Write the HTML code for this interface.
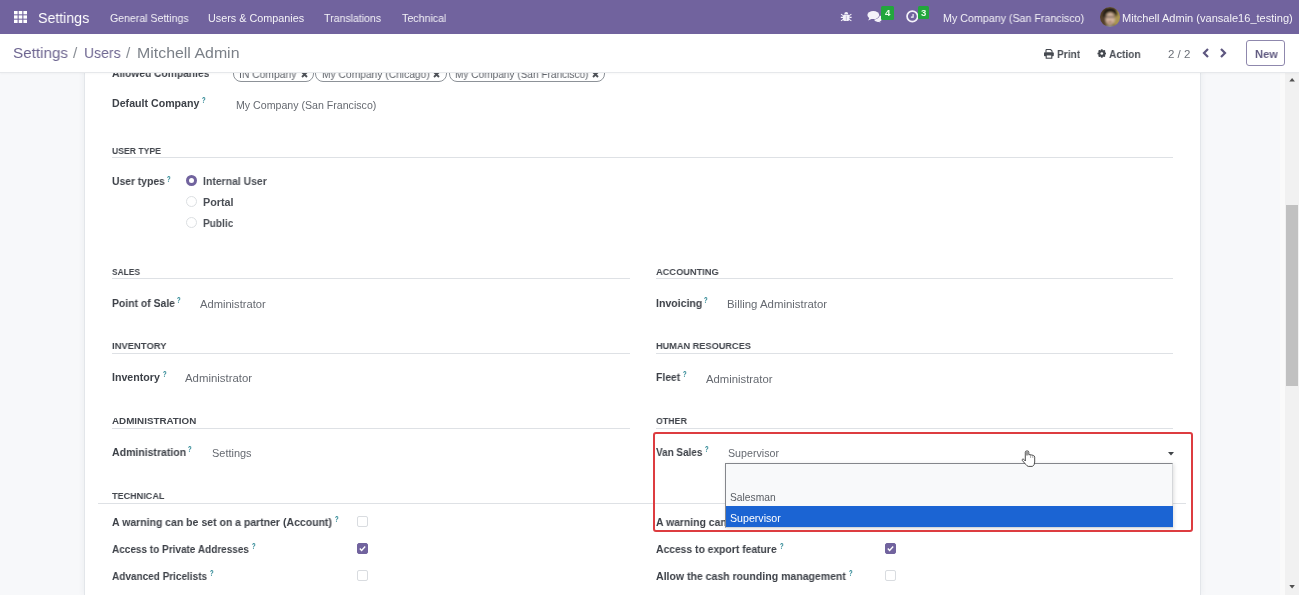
<!DOCTYPE html>
<html><head><meta charset="utf-8">
<style>
html,body{margin:0;padding:0;}
body{width:1299px;height:595px;overflow:hidden;position:relative;background:#f7f8fa;font-family:"Liberation Sans",sans-serif;}
.a{position:absolute;}
.tx{position:absolute;white-space:pre;line-height:1;transform-origin:0 0;will-change:transform;font-family:"Liberation Sans",sans-serif;}
.hp{position:absolute;will-change:transform;font-size:8.4px;line-height:1;font-weight:700;color:#2a8592;transform:scaleX(0.68);transform-origin:0 0;font-family:"Liberation Sans",sans-serif;}
.nav{left:0;top:0;width:1299px;height:34px;background:#71639e;}
.cp{left:0;top:34px;width:1299px;height:38px;background:#fff;border-bottom:1px solid #e6e8eb;box-shadow:0 1px 2px rgba(0,0,0,0.03);}
.sheet{left:84px;top:0;width:1117px;height:595px;background:#fff;border-left:1px solid #e3e6ea;border-right:1px solid #e3e6ea;box-sizing:border-box;box-shadow:0 0 7px rgba(40,50,70,0.06);}
.sep{position:absolute;height:1px;background:#dee1e5;}
.radio{position:absolute;width:11px;height:11px;border-radius:50%;box-sizing:border-box;border:1.3px solid #dcdfe2;background:#fff;}
.radio.on{border:3.5px solid #71639e;background:#fff;}
.cb{position:absolute;width:11px;height:11px;border-radius:2px;box-sizing:border-box;border:1px solid #d9dce0;background:#fff;}
.cb.on{background:#71639e;border-color:#71639e;}
.tag{position:absolute;height:17px;top:65px;border:1px solid #8d9298;border-radius:8px;box-sizing:border-box;background:#fff;}
.clip{left:0;top:72px;width:1299px;height:523px;overflow:hidden;}
.inner{left:0;top:-72px;width:1299px;height:595px;}
</style></head><body>
<div class="a clip"><div class="a inner">
<div class="a sheet"></div>
<!-- tags -->
<div class="tag" style="left:232.5px;width:81px;"></div>
<div class="tag" style="left:315px;width:131.6px;"></div>
<div class="tag" style="left:448.7px;width:156.2px;"></div>
<svg class="a" style="left:300.5px;top:71px" width="7" height="7" viewBox="0 0 7 7"><path d="M1 1 L6 6 M6 1 L1 6" stroke="#4e5258" stroke-width="1.9"/></svg>
<svg class="a" style="left:433px;top:71px" width="7" height="7" viewBox="0 0 7 7"><path d="M1 1 L6 6 M6 1 L1 6" stroke="#4e5258" stroke-width="1.9"/></svg>
<svg class="a" style="left:591.5px;top:71px" width="7" height="7" viewBox="0 0 7 7"><path d="M1 1 L6 6 M6 1 L1 6" stroke="#4e5258" stroke-width="1.9"/></svg>

<div class="sep" style="left:112px;top:157px;width:1061px;"></div>
<div class="sep" style="left:112px;top:278px;width:518px;"></div>
<div class="sep" style="left:656px;top:278px;width:517px;"></div>
<div class="sep" style="left:112px;top:353px;width:518px;"></div>
<div class="sep" style="left:656px;top:353px;width:517px;"></div>
<div class="sep" style="left:112px;top:428px;width:518px;"></div>
<div class="sep" style="left:656px;top:428px;width:517px;"></div>
<div class="sep" style="left:98px;top:503px;width:1088px;"></div>

<div class="radio on" style="left:186.2px;top:174.7px;"></div>
<div class="radio" style="left:186.2px;top:196px;"></div>
<div class="radio" style="left:186.2px;top:217px;"></div>

<div class="cb" style="left:357.2px;top:516px;"></div>
<div class="cb on" style="left:357.2px;top:543.2px;"><svg width="11" height="11" viewBox="0 0 11 11" style="position:absolute;left:-1px;top:-1px"><path d="M2.8 5.6 L4.6 7.4 L8.2 3.6" fill="none" stroke="#fff" stroke-width="1.4"/></svg></div>
<div class="cb" style="left:357.2px;top:570px;"></div>
<div class="cb on" style="left:884.5px;top:543.2px;"><svg width="11" height="11" viewBox="0 0 11 11" style="position:absolute;left:-1px;top:-1px"><path d="M2.8 5.6 L4.6 7.4 L8.2 3.6" fill="none" stroke="#fff" stroke-width="1.4"/></svg></div>
<div class="cb" style="left:884.5px;top:570px;"></div>

<span class="tx" style="left:112.40px;top:67.61px;font-size:10.61px;font-weight:700;color:#3d4148;transform:scaleX(0.9653);">Allowed Companies</span>
<span class="tx" style="left:239.43px;top:68.51px;font-size:10.61px;font-weight:400;color:#5f636a;transform:scaleX(0.9724);">IN Company</span>
<span class="tx" style="left:322.03px;top:68.51px;font-size:10.61px;font-weight:400;color:#5f636a;transform:scaleX(0.9664);">My Company (Chicago)</span>
<span class="tx" style="left:454.75px;top:68.51px;font-size:10.61px;font-weight:400;color:#5f636a;transform:scaleX(0.9511);">My Company (San Francisco)</span>
<span class="tx" style="left:112.40px;top:98.41px;font-size:10.61px;font-weight:700;color:#3d4148;transform:scaleX(1.0023);">Default Company</span>
<span class="tx" style="left:236.40px;top:100.01px;font-size:10.61px;font-weight:400;color:#666a71;transform:scaleX(1.0000);">My Company (San Francisco)</span>
<span class="tx" style="left:112.20px;top:146.12px;font-size:9.78px;font-weight:700;color:#42464d;transform:scaleX(0.8855);">USER TYPE</span>
<span class="tx" style="left:112.33px;top:175.51px;font-size:10.61px;font-weight:700;color:#3d4148;transform:scaleX(0.9736);">User types</span>
<span class="tx" style="left:203.42px;top:176.01px;font-size:10.61px;font-weight:700;color:#4a4e55;transform:scaleX(0.9844);">Internal User</span>
<span class="tx" style="left:203.38px;top:196.81px;font-size:10.61px;font-weight:700;color:#4a4e55;transform:scaleX(1.0179);">Portal</span>
<span class="tx" style="left:203.45px;top:217.51px;font-size:10.61px;font-weight:700;color:#4a4e55;transform:scaleX(0.9516);">Public</span>
<span class="tx" style="left:111.90px;top:267.02px;font-size:9.78px;font-weight:700;color:#42464d;transform:scaleX(0.8625);">SALES</span>
<span class="tx" style="left:112.22px;top:297.81px;font-size:10.61px;font-weight:700;color:#3d4148;transform:scaleX(0.9794);">Point of Sale</span>
<span class="tx" style="left:200.40px;top:298.81px;font-size:10.61px;font-weight:400;color:#666a71;transform:scaleX(1.0516);">Administrator</span>
<span class="tx" style="left:111.73px;top:341.42px;font-size:9.78px;font-weight:700;color:#42464d;transform:scaleX(0.9655);">INVENTORY</span>
<span class="tx" style="left:112.20px;top:372.31px;font-size:10.61px;font-weight:700;color:#3d4148;transform:scaleX(1.0021);">Inventory</span>
<span class="tx" style="left:185.20px;top:373.31px;font-size:10.61px;font-weight:400;color:#666a71;transform:scaleX(1.0726);">Administrator</span>
<span class="tx" style="left:111.90px;top:416.22px;font-size:9.78px;font-weight:700;color:#42464d;transform:scaleX(1.0048);">ADMINISTRATION</span>
<span class="tx" style="left:112.20px;top:446.81px;font-size:10.61px;font-weight:700;color:#3d4148;transform:scaleX(0.9892);">Administration</span>
<span class="tx" style="left:212.17px;top:447.81px;font-size:10.61px;font-weight:400;color:#666a71;transform:scaleX(1.0324);">Settings</span>
<span class="tx" style="left:656.00px;top:267.02px;font-size:9.78px;font-weight:700;color:#42464d;transform:scaleX(0.9485);">ACCOUNTING</span>
<span class="tx" style="left:656.11px;top:297.81px;font-size:10.61px;font-weight:700;color:#3d4148;transform:scaleX(0.9933);">Invoicing</span>
<span class="tx" style="left:727.12px;top:299.01px;font-size:10.61px;font-weight:400;color:#666a71;transform:scaleX(1.0750);">Billing Administrator</span>
<span class="tx" style="left:655.86px;top:341.42px;font-size:9.78px;font-weight:700;color:#42464d;transform:scaleX(0.9400);">HUMAN RESOURCES</span>
<span class="tx" style="left:656.12px;top:372.31px;font-size:10.61px;font-weight:700;color:#3d4148;transform:scaleX(0.9750);">Fleet</span>
<span class="tx" style="left:705.90px;top:373.51px;font-size:10.61px;font-weight:400;color:#666a71;transform:scaleX(1.0645);">Administrator</span>
<span class="tx" style="left:656.00px;top:416.22px;font-size:9.78px;font-weight:700;color:#42464d;transform:scaleX(0.9029);">OTHER</span>
<span class="tx" style="left:656.10px;top:446.81px;font-size:10.61px;font-weight:700;color:#3d4148;transform:scaleX(0.9347);">Van Sales</span>
<span class="tx" style="left:728.39px;top:448.01px;font-size:10.61px;font-weight:400;color:#666a71;transform:scaleX(1.0060);">Supervisor</span>
<span class="tx" style="left:112.00px;top:491.02px;font-size:9.78px;font-weight:700;color:#42464d;transform:scaleX(0.9286);">TECHNICAL</span>
<span class="tx" style="left:112.20px;top:516.91px;font-size:10.61px;font-weight:700;color:#3d4148;transform:scaleX(0.9883);">A warning can be set on a partner (Account)</span>
<span class="tx" style="left:112.20px;top:544.11px;font-size:10.61px;font-weight:700;color:#3d4148;transform:scaleX(0.9428);">Access to Private Addresses</span>
<span class="tx" style="left:112.20px;top:571.11px;font-size:10.61px;font-weight:700;color:#3d4148;transform:scaleX(0.9426);">Advanced Pricelists</span>
<span class="tx" style="left:656.10px;top:516.91px;font-size:10.61px;font-weight:700;color:#3d4148;transform:scaleX(0.9792);">A warning can</span>
<span class="tx" style="left:656.10px;top:544.11px;font-size:10.61px;font-weight:700;color:#3d4148;transform:scaleX(0.9742);">Access to export feature</span>
<span class="tx" style="left:656.10px;top:571.11px;font-size:10.61px;font-weight:700;color:#3d4148;transform:scaleX(0.9911);">Allow the cash rounding management</span>
<span class="hp" style="left:201.6px;top:96.0px">?</span>
<span class="hp" style="left:166.9px;top:174.8px">?</span>
<span class="hp" style="left:177.2px;top:295.5px">?</span>
<span class="hp" style="left:162.5px;top:370.2px">?</span>
<span class="hp" style="left:188.4px;top:445.0px">?</span>
<span class="hp" style="left:703.9px;top:295.7px">?</span>
<span class="hp" style="left:682.8px;top:370.1px">?</span>
<span class="hp" style="left:705.0px;top:445.0px">?</span>
<span class="hp" style="left:335.3px;top:515.0px">?</span>
<span class="hp" style="left:252.0px;top:542.0px">?</span>
<span class="hp" style="left:209.6px;top:569.0px">?</span>
<span class="hp" style="left:779.6px;top:542.1px">?</span>
<span class="hp" style="left:848.8px;top:569.0px">?</span>
<span class="hp" style="left:213.6px;top:65.0px">?</span>

<!-- select caret -->
<svg class="a" style="left:1167.5px;top:451.5px" width="6" height="4" viewBox="0 0 6 4"><path d="M0 0 H6 L3 3.5 Z" fill="#404448"/></svg>

<!-- dropdown -->
<div class="a" style="left:725px;top:463.3px;width:448px;height:64.7px;box-sizing:border-box;background:#f8f9fa;border-left:1px solid #85878c;border-top:1.7px solid #84868b;border-right:1px solid #d5d7da;border-bottom:1px solid #d5d7da;box-shadow:1px 1px 4px rgba(0,0,0,0.13);"></div>
<div class="a" style="left:725.8px;top:506.3px;width:447.2px;height:20.8px;background:#1b64d3;"></div>
<span class="tx" style="left:729.69px;top:492.67px;font-size:10.20px;font-weight:400;color:#595d63;transform:scaleX(1.0068);">Salesman</span>
<span class="tx" style="left:729.66px;top:513.67px;font-size:10.20px;font-weight:400;color:#ffffff;transform:scaleX(1.0426);">Supervisor</span>

<!-- red box -->
<div class="a" style="left:653px;top:431.8px;width:539.8px;height:100.7px;box-sizing:border-box;border:2.9px solid #dd3c40;border-radius:3px;"></div>

<!-- hand cursor -->
<svg class="a" style="left:1021px;top:450px" width="15" height="18" viewBox="0 0 15 18">
<path d="M4.3 11 V2.2 Q4.3 0.9 6.05 0.9 Q7.8 0.9 7.8 2.2 V4.6 L10.2 4.9 L12.3 5.4 Q13.7 5.9 13.7 7.2 V12 Q13.7 15 11.5 16.4 H7.3 Q6 16 4.8 14.5 L1.2 10.3 Q0.8 9.6 1.6 9.2 Q2.4 8.9 3 9.5 L4.3 11 Z" fill="#fff" stroke="#3a3a3a" stroke-width="0.9"/>
<rect x="4.8" y="1.5" width="2.5" height="4" fill="#9a9a9a"/>
<path d="M9.6 5 V8 M11.8 5.4 V8" stroke="#777" stroke-width="0.6"/>
</svg>
</div></div>

<!-- scrollbar -->
<div class="a" style="left:1280px;top:72px;width:5px;height:523px;background:#fafafa;"></div>
<div class="a" style="left:1285px;top:72px;width:14px;height:523px;background:#f1f1f1;"></div>
<div class="a" style="left:1286px;top:204.5px;width:11.5px;height:181.7px;background:#c1c1c1;"></div>
<svg class="a" style="left:1289px;top:78.4px" width="6.2" height="4" viewBox="0 0 7 5"><path d="M0 4.5 H7 L3.5 0 Z" fill="#505050"/></svg>
<svg class="a" style="left:1288.8px;top:585px" width="6.2" height="4" viewBox="0 0 7 5"><path d="M0 0 H7 L3.5 4.5 Z" fill="#505050"/></svg>

<!-- navbar -->
<div class="a nav"></div>
<svg class="a" style="left:14px;top:11px" width="13" height="12" viewBox="0 0 13 12">
<g fill="#fff"><rect x="0" y="0" width="3.6" height="3.3"/><rect x="4.7" y="0" width="3.6" height="3.3"/><rect x="9.4" y="0" width="3.6" height="3.3"/>
<rect x="0" y="4.35" width="3.6" height="3.3"/><rect x="4.7" y="4.35" width="3.6" height="3.3"/><rect x="9.4" y="4.35" width="3.6" height="3.3"/>
<rect x="0" y="8.7" width="3.6" height="3.3"/><rect x="4.7" y="8.7" width="3.6" height="3.3"/><rect x="9.4" y="8.7" width="3.6" height="3.3"/></g></svg>
<!-- bug -->
<svg class="a" style="left:840px;top:11px" width="12" height="11" viewBox="0 0 12 11">
<g fill="#f4f2fa"><path d="M4.3 3 A1.95 2.1 0 0 1 8.2 3 Z"/><rect x="2.9" y="3.6" width="6.6" height="6.3" rx="1.6"/></g>
<g stroke="#f4f2fa" stroke-width="1.1" fill="none"><path d="M3.2 4.6 L1 3.1 M3 6.4 L0.8 6.4 M3.2 8.4 L1 9.9 M9.2 4.6 L11.4 3.1 M9.4 6.4 L11.6 6.4 M9.2 8.4 L11.4 9.9"/></g>
<rect x="5.9" y="4.6" width="0.6" height="4.8" fill="#a79fc4"/></svg>
<!-- chat -->
<svg class="a" style="left:866px;top:10px" width="16" height="13" viewBox="0 0 16 13">
<g fill="#f4f2fa"><ellipse cx="12" cy="8.6" rx="3.9" ry="3.3"/><path d="M13 11 L14.8 12.6 L10.8 11.6 Z"/></g>
<ellipse cx="7.3" cy="5.05" rx="6.5" ry="4.6" fill="#71639e"/>
<g fill="#f4f2fa"><ellipse cx="7.3" cy="5.05" rx="5.9" ry="4.05"/><path d="M3.5 7.6 L2.2 10.5 L6.5 8.6 Z"/></g></svg>
<div class="a" style="left:880.8px;top:6.4px;width:12.8px;height:13.4px;background:#22a63d;border-radius:1.5px;"></div>
<span class="tx" style="left:884.6px;top:7.7px;font-size:9.6px;font-weight:700;color:#eaffea;">4</span>
<!-- clock -->
<svg class="a" style="left:906px;top:9.8px" width="13" height="13" viewBox="0 0 13 13">
<circle cx="6.35" cy="6.35" r="5.3" fill="none" stroke="#f4f2fa" stroke-width="1.7"/>
<path d="M7.1 4 V7.2 H4.9" fill="none" stroke="#f4f2fa" stroke-width="1.2"/></svg>
<div class="a" style="left:917.6px;top:6.2px;width:11.1px;height:13px;background:#22a63d;border-radius:1.5px;"></div>
<span class="tx" style="left:921.3px;top:7.8px;font-size:9.6px;font-weight:700;color:#eaffea;">3</span>
<!-- avatar -->
<svg class="a" style="left:1100px;top:6.8px" width="20" height="20" viewBox="0 0 20 20">
<defs><clipPath id="av"><circle cx="10" cy="10" r="10"/></clipPath><filter id="bl" x="-20%" y="-20%" width="140%" height="140%"><feGaussianBlur stdDeviation="0.8"/></filter></defs>
<g clip-path="url(#av)"><g filter="url(#bl)">
<rect x="-2" y="-2" width="24" height="24" fill="#7f6a44"/>
<rect x="-2" y="-2" width="8" height="24" fill="#54402c"/>
<rect x="14" y="3" width="8" height="15" fill="#a89450"/>
<ellipse cx="10.2" cy="11.8" rx="4.6" ry="6" fill="#d6b8a2"/>
<path d="M2.5 9 Q3 0 10.5 0.5 Q17.5 0.5 17.5 8 L15.5 9.5 Q14.5 5 10.2 5 Q6 5 5.2 11 Z" fill="#241a16"/>
<rect x="5.5" y="9.2" width="9.4" height="1.4" fill="#5a4a42"/>
<ellipse cx="10" cy="15" rx="2.2" ry="0.9" fill="#9a6a5a"/>
<path d="M1 22 Q10 16 19 22 Z" fill="#8e9aa0"/>
</g></g></svg>

<!-- control panel -->
<div class="a cp"></div>
<svg class="a" style="left:1044.2px;top:49px" width="10" height="10" viewBox="0 0 10 10">
<path d="M2 3.4 V1.2 Q2 0.5 2.7 0.5 H6.6 L8 1.9 V3.4" fill="none" stroke="#44484f" stroke-width="1.1"/>
<rect x="0" y="3.3" width="9.8" height="3.9" rx="0.9" fill="#44484f"/>
<rect x="2.2" y="5.9" width="5.6" height="3.3" fill="#fff" stroke="#44484f" stroke-width="1.1"/></svg>
<svg class="a" style="left:1096.9px;top:48.8px" width="9.6" height="9" viewBox="0 0 10 10">
<g fill="#44484f"><circle cx="5" cy="5" r="3.7"/>
<rect x="3.9" y="0.2" width="2.2" height="9.6" rx="0.5"/><rect x="0.2" y="3.9" width="9.6" height="2.2" rx="0.5"/>
<rect x="3.9" y="0.2" width="2.2" height="9.6" rx="0.5" transform="rotate(45 5 5)"/><rect x="3.9" y="0.2" width="2.2" height="9.6" rx="0.5" transform="rotate(-45 5 5)"/></g>
<circle cx="5" cy="5" r="1.5" fill="#fff"/></svg>
<svg class="a" style="left:1201.5px;top:47.5px" width="8" height="10" viewBox="0 0 8 10"><path d="M6 1 L2 5 L6 9" fill="none" stroke="#5d567f" stroke-width="2.2"/></svg>
<svg class="a" style="left:1218.5px;top:47.5px" width="8" height="10" viewBox="0 0 8 10"><path d="M2 1 L6 5 L2 9" fill="none" stroke="#5d567f" stroke-width="2.2"/></svg>
<div class="a" style="left:1246.3px;top:40px;width:39px;height:25.5px;box-sizing:border-box;border:1px solid #8f88ad;border-radius:3px;"></div>
<span class="tx" style="left:37.72px;top:10.60px;font-size:14.53px;font-weight:400;color:#ffffff;transform:scaleX(0.9765);">Settings</span>
<span class="tx" style="left:109.80px;top:12.50px;font-size:10.75px;font-weight:400;color:rgba(255,255,255,0.92);transform:scaleX(0.9812);">General Settings</span>
<span class="tx" style="left:208.29px;top:12.50px;font-size:10.75px;font-weight:400;color:rgba(255,255,255,0.92);transform:scaleX(1.0053);">Users &amp; Companies</span>
<span class="tx" style="left:324.30px;top:12.50px;font-size:10.75px;font-weight:400;color:rgba(255,255,255,0.92);transform:scaleX(0.9828);">Translations</span>
<span class="tx" style="left:401.80px;top:12.50px;font-size:10.75px;font-weight:400;color:rgba(255,255,255,0.92);transform:scaleX(0.9886);">Technical</span>
<span class="tx" style="left:943.11px;top:12.80px;font-size:10.75px;font-weight:400;color:rgba(255,255,255,0.92);transform:scaleX(0.9936);">My Company (San Francisco)</span>
<span class="tx" style="left:1121.67px;top:12.80px;font-size:10.75px;font-weight:400;color:rgba(255,255,255,0.92);transform:scaleX(1.0280);">Mitchell Admin (vansale16_testing)</span>
<span class="tx" style="left:13.21px;top:45.00px;font-size:15.36px;font-weight:400;color:#6d6590;transform:scaleX(0.9907);">Settings</span>
<span class="tx" style="left:73.30px;top:45.00px;font-size:15.36px;font-weight:400;color:#8a8f96;transform:scaleX(1.0000);">/</span>
<span class="tx" style="left:84.09px;top:45.00px;font-size:15.36px;font-weight:400;color:#6d6590;transform:scaleX(0.9128);">Users</span>
<span class="tx" style="left:126.30px;top:45.00px;font-size:15.36px;font-weight:400;color:#8a8f96;transform:scaleX(1.0000);">/</span>
<span class="tx" style="left:136.86px;top:45.00px;font-size:15.36px;font-weight:400;color:#7b8088;transform:scaleX(1.0351);">Mitchell Admin</span>
<span class="tx" style="left:1057.20px;top:48.62px;font-size:11.31px;font-weight:700;color:#4b4f56;transform:scaleX(0.9000);">Print</span>
<span class="tx" style="left:1109.00px;top:48.62px;font-size:11.31px;font-weight:700;color:#4b4f56;transform:scaleX(0.9000);">Action</span>
<span class="tx" style="left:1168.30px;top:48.72px;font-size:11.31px;font-weight:400;color:#6b7078;transform:scaleX(1.0190);">2 / 2</span>
<span class="tx" style="left:1254.62px;top:48.72px;font-size:11.31px;font-weight:700;color:#625c82;transform:scaleX(0.9773);">New</span>
</body></html>
